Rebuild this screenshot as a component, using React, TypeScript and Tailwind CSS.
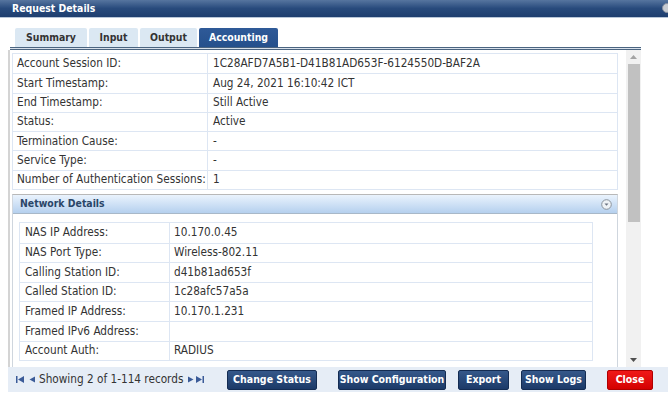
import React from "react";

const rows1: [string, string][] = [
  ["Account Session ID:", "1C28AFD7A5B1-D41B81AD653F-6124550D-BAF2A"],
  ["Start Timestamp:", "Aug 24, 2021 16:10:42 ICT"],
  ["End Timestamp:", "Still Active"],
  ["Status:", "Active"],
  ["Termination Cause:", "-"],
  ["Service Type:", "-"],
  ["Number of Authentication Sessions:", "1"],
];

const rows2: [string, string][] = [
  ["NAS IP Address:", "10.170.0.45"],
  ["NAS Port Type:", "Wireless-802.11"],
  ["Calling Station ID:", "d41b81ad653f"],
  ["Called Station ID:", "1c28afc57a5a"],
  ["Framed IP Address:", "10.170.1.231"],
  ["Framed IPv6 Address:", ""],
  ["Account Auth:", "RADIUS"],
];

function Btn({ children, red, w }: { children: React.ReactNode; red?: boolean; w: string }) {
  return (
    <div
      className={
        "h-[20px] flex-shrink-0 whitespace-nowrap flex items-center justify-center rounded-[2px] text-white font-bold text-[10.5px] border " +
        w +
        " " +
        (red
          ? "bg-gradient-to-b from-[#f01818] to-[#d40000] border-[#b00000]"
          : "bg-gradient-to-b from-[#35588a] to-[#1c3a68] border-[#142c52]")
      }
    >
      {children}
    </div>
  );
}

export default function App() {
  return (
    <div className="w-[668px] h-[395px] bg-white relative overflow-hidden font-['DejaVu_Sans_Condensed','DejaVu_Sans',sans-serif] font-stretch-condensed text-[11.7px] text-[#333]">
      {/* title bar */}
      <div className="h-[17px] bg-gradient-to-b from-[#56759f] via-[#284a7c] to-[#1e3e6f] flex items-center pl-[12px] relative">
        <span className="text-white font-bold text-[10.4px]">Request Details</span>
        <div className="absolute right-[-4px] top-[3px] w-[10px] h-[10px] rounded-full bg-[#c8ccd2] border border-[#8890a0]" />
      </div>
      <div className="h-px bg-[#b8c6d8]" />

      {/* tabs */}
      <div className="flex pl-[15px] pt-[10px] gap-[2px] text-[10.4px]">
        <div className="w-[72px] h-[19px] flex items-center justify-center rounded-t-[2px] bg-[#dbe8f3] font-bold text-[#333]">Summary</div>
        <div className="w-[49px] h-[19px] flex items-center justify-center rounded-t-[2px] bg-[#dbe8f3] font-bold text-[#333]">Input</div>
        <div className="w-[57px] h-[19px] flex items-center justify-center rounded-t-[2px] bg-[#dbe8f3] font-bold text-[#333]">Output</div>
        <div className="w-[79px] h-[19px] flex items-center justify-center rounded-t-[2px] bg-gradient-to-b from-[#2f5a98] to-[#25508c] font-bold text-white">
          Accounting
        </div>
      </div>
      <div className="ml-[10px] w-[631px] h-[3px] border-t border-b border-[#4a6480] bg-[#d8e0ea]" />

      {/* content */}
      <div className="flex h-[317px]">
        <div className="w-[2px] ml-[8px] bg-[#d4d4d4]" />
        <div className="w-[606px] ml-[2px] overflow-hidden">
          <div className="pt-[3px]">
            <div className="border border-[#dde6f3]">
              {rows1.map(([k, v], i) => (
                <div
                  key={k}
                  className={"flex h-[19.3px] items-center " + (i > 0 ? "border-t border-[#dde6f3]" : "")}
                >
                  <div className="w-[195px] h-full flex items-center pl-[4px] border-r border-[#dde6f3] whitespace-nowrap">{k}</div>
                  <div className="pl-[5px] whitespace-nowrap">{v}</div>
                </div>
              ))}
            </div>
          </div>
          <div className="mt-[4px] border-t border-[#b8b8b8] border-l border-r border-l-[#cfd6de] border-r-[#cfd6de]">
            <div className="h-[19px] bg-gradient-to-b from-[#eaf3fd] to-[#b5d0ee] flex items-center justify-between pl-[7px] pr-[5px] border-b border-[#a8b8c8]">
              <span className="font-bold text-[#2a4668] text-[10.4px]">Network Details</span>
              <svg width="11" height="11" viewBox="0 0 11 11">
                <circle cx="5.5" cy="5.5" r="4.8" fill="#eef2f6" stroke="#8a929c" strokeWidth="1" />
                <path d="M3.5 4.5 L7.5 4.5 L5.5 6.8 Z" fill="#6a7280" />
              </svg>
            </div>
            <div className="pl-[6px] pt-[8px] pb-[10px]">
              <div className="w-[574px] border border-[#dde6f3]">
                {rows2.map(([k, v], i) => (
                  <div
                    key={k}
                    className={"flex h-[19.6px] items-center " + (i > 0 ? "border-t border-[#dde6f3]" : "")}
                  >
                    <div className="w-[150px] h-full flex items-center pl-[5px] border-r border-[#dde6f3] whitespace-nowrap">{k}</div>
                    <div className="pl-[4px] whitespace-nowrap">{v}</div>
                  </div>
                ))}
              </div>
            </div>
          </div>
        </div>
        {/* scrollbar */}
        <div className="ml-[8px] w-[15px] bg-[#f1f1f1] flex flex-col items-center">
          <div className="h-[14px] flex items-center justify-center">
            <svg width="7" height="4" viewBox="0 0 7 4"><path d="M0 4 L3.5 0 L7 4 Z" fill="#a3a3a3" /></svg>
          </div>
          <div className="w-[12px] h-[158px] bg-[#c1c1c1]" />
          <div className="flex-1" />
          <div className="h-[14px] flex items-center justify-center">
            <svg width="7" height="4" viewBox="0 0 7 4"><path d="M0 0 L7 0 L3.5 4 Z" fill="#505050" /></svg>
          </div>
        </div>
      </div>

      {/* footer */}
      <div className="ml-[8px] h-[25px] bg-[#e6edf6] flex items-center pl-[8px] whitespace-nowrap">
        <div className="flex items-center gap-[5px] flex-shrink-0">
          <svg width="8" height="7" viewBox="0 0 8 7"><rect x="0" y="0" width="1.5" height="7" fill="#3b5b98" /><path d="M8 0 L2 3.5 L8 7 Z" fill="#3b5b98" /></svg>
          <svg width="6" height="7" viewBox="0 0 6 7"><path d="M6 0.5 L0.5 3.5 L6 6.5 Z" fill="#3b5b98" /></svg>
        </div>
        <span className="ml-[4px] w-[148px] flex-shrink-0 text-[#333] text-[11.7px]">Showing 2 of 1-114 records</span>
        <div className="flex items-center gap-[2px] ml-[1px] flex-shrink-0">
          <svg width="6" height="7" viewBox="0 0 6 7"><path d="M0 0.5 L5.5 3.5 L0 6.5 Z" fill="#3b5b98" /></svg>
          <svg width="8" height="7" viewBox="0 0 8 7"><path d="M0 0 L6 3.5 L0 7 Z" fill="#3b5b98" /><rect x="6.5" y="0" width="1.5" height="7" fill="#3b5b98" /></svg>
        </div>
        <div className="ml-[23px] flex items-center flex-shrink-0">
          <Btn w="w-[90px]">Change Status</Btn>
          <div className="ml-[21px]"><Btn w="w-[108px]">Show Configuration</Btn></div>
          <div className="ml-[12px]"><Btn w="w-[51px]">Export</Btn></div>
          <div className="ml-[12px]"><Btn w="w-[65px]">Show Logs</Btn></div>
          <div className="ml-[21px]"><Btn red w="w-[46px]">Close</Btn></div>
        </div>
      </div>
    </div>
  );
}
